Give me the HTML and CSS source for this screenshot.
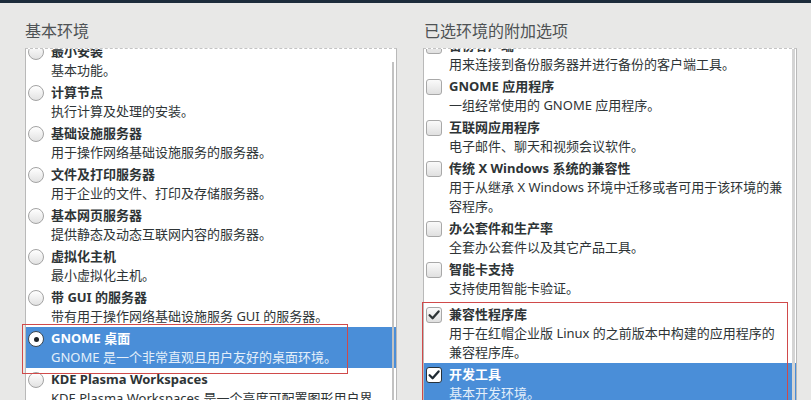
FILE: index.html
```html
<!DOCTYPE html>
<html lang="zh-CN">
<head>
<meta charset="utf-8">
<title>软件选择</title>
<link rel="stylesheet" href="styles.css">
</head>
<body>
<div class="topbar"></div>
<div class="page">
  <section class="col col-left">
    <h2 class="heading">基本环境</h2>
    <div class="listbox">
      <div class="thumb thumb-left"></div>
      <ul class="list list-left">
        <li class="item"><span class="radio"></span><div class="text"><div class="title">最小安装</div><div class="desc">基本功能。</div></div></li>
        <li class="item"><span class="radio"></span><div class="text"><div class="title">计算节点</div><div class="desc">执行计算及处理的安装。</div></div></li>
        <li class="item"><span class="radio"></span><div class="text"><div class="title">基础设施服务器</div><div class="desc">用于操作网络基础设施服务的服务器。</div></div></li>
        <li class="item"><span class="radio"></span><div class="text"><div class="title">文件及打印服务器</div><div class="desc">用于企业的文件、打印及存储服务器。</div></div></li>
        <li class="item"><span class="radio"></span><div class="text"><div class="title">基本网页服务器</div><div class="desc">提供静态及动态互联网内容的服务器。</div></div></li>
        <li class="item"><span class="radio"></span><div class="text"><div class="title">虚拟化主机</div><div class="desc">最小虚拟化主机。</div></div></li>
        <li class="item"><span class="radio"></span><div class="text"><div class="title">带 GUI 的服务器</div><div class="desc">带有用于操作网络基础设施服务 GUI 的服务器。</div></div></li>
        <li class="item selected"><span class="radio checked"></span><div class="text"><div class="title">GNOME 桌面</div><div class="desc">GNOME 是一个非常直观且用户友好的桌面环境。</div></div></li>
        <li class="item"><span class="radio"></span><div class="text"><div class="title">KDE Plasma Workspaces</div><div class="desc">KDE Plasma Workspaces 是一个高度可配置图形用户界<br>面，其中包括面板、桌面、系统图标以及桌面向导。</div></div></li>
      </ul>
    </div>
  </section>
  <section class="col col-right">
    <h2 class="heading">已选环境的附加选项</h2>
    <div class="listbox">
      <div class="thumb thumb-right"></div>
      <ul class="list list-right">
        <li class="item"><span class="check"></span><div class="text"><div class="title">备份客户端</div><div class="desc">用来连接到备份服务器并进行备份的客户端工具。</div></div></li>
        <li class="item"><span class="check"></span><div class="text"><div class="title">GNOME 应用程序</div><div class="desc">一组经常使用的 GNOME 应用程序。</div></div></li>
        <li class="item"><span class="check"></span><div class="text"><div class="title">互联网应用程序</div><div class="desc">电子邮件、聊天和视频会议软件。</div></div></li>
        <li class="item"><span class="check"></span><div class="text"><div class="title">传统 X Windows 系统的兼容性</div><div class="desc">用于从继承 X Windows 环境中迁移或者可用于该环境的兼<br>容程序。</div></div></li>
        <li class="item"><span class="check"></span><div class="text"><div class="title">办公套件和生产率</div><div class="desc">全套办公套件以及其它产品工具。</div></div></li>
        <li class="item"><span class="check"></span><div class="text"><div class="title">智能卡支持</div><div class="desc">支持使用智能卡验证。</div></div></li>
        <li class="item item-gap"><span class="check checked"><svg viewBox="0 0 16 16" width="16" height="16"><path d="M3.6 8.2 L6.6 11.2 L12.6 4.4" fill="none" stroke="#2e3436" stroke-width="2.3" stroke-linecap="round" stroke-linejoin="round"/></svg></span><div class="text"><div class="title">兼容性程序库</div><div class="desc">用于在红帽企业版 Linux 的之前版本中构建的应用程序的<br>兼容程序库。</div></div></li>
        <li class="item selected"><span class="check checked"><svg viewBox="0 0 16 16" width="16" height="16"><path d="M3.6 8.2 L6.6 11.2 L12.6 4.4" fill="none" stroke="#1f2a33" stroke-width="2.3" stroke-linecap="round" stroke-linejoin="round"/></svg></span><div class="text"><div class="title">开发工具</div><div class="desc">基本开发环境。</div></div></li>
      </ul>
    </div>
  </section>
  <div class="mark mark-left"></div>
  <div class="mark mark-right"></div>
</div>
</body>
</html>
```
FILE: styles.css
```css
* { box-sizing: border-box; }
html, body {
  margin: 0;
  padding: 0;
  height: 400px;
  overflow: hidden;
  background: #e8e8e7;
  font-family: "Noto Sans", "Noto Sans CJK SC", sans-serif;
  color: #2e3436;
}
.topbar {
  height: 3px;
  background: #1d2c3b;
}
.page {
  position: relative;
  display: flex;
  gap: 26px;
  padding: 18px 0 0 25px;
  height: 397px;
}
.col-left { width: 372px; }
.col-right { width: 374px; }
.heading {
  margin: 0 0 7px 0;
  font-size: 16px;
  line-height: 20px;
  font-weight: normal;
  color: #4e5254;
}
.col-right .heading { margin-left: 1px; }
.listbox {
  position: relative;
  height: 360px;
  background: #fff;
  border: 1px solid #b9b9b9;
  border-top: 1px dashed #c4c4c4;
  overflow: hidden;
}
.thumb {
  position: absolute;
  right: 2px;
  width: 2px;
  bottom: 0;
  background: #c2c2c2;
  z-index: 2;
}
.thumb-left { top: 13px; }
.thumb-right { top: 0; right: 1px; width: 3px; background: #d4d4d4; }
.list {
  list-style: none;
  margin: 0;
  padding: 0;
}
.list-left { margin-top: -9px; }
.list-right { margin-top: -15px; }
.item {
  display: flex;
  align-items: flex-start;
  padding: 1px 0;
  white-space: nowrap;
}
.item-gap { margin-top: 4px; }
.text { display: flex; flex-direction: column; }
.title {
  font-size: 13px;
  line-height: 20px;
  font-weight: bold;
  color: #2e3436;
}
.desc {
  font-size: 13px;
  line-height: 19px;
  color: #2e3436;
}
.item.selected { background: #4a8ed8; }
.item.selected .title { color: #fff; }
.item.selected .desc { color: #e3eefa; }

.radio {
  flex: none;
  width: 16px;
  height: 16px;
  margin: 3px 7px 0 2px;
  border-radius: 50%;
  border: 1px solid #a3a3a3;
  background: linear-gradient(#ffffff, #e2e2e2);
  position: relative;
}
.radio.checked {
  border-color: #3c4650;
  background: #fff;
}
.radio.checked::after {
  content: "";
  position: absolute;
  left: 4.5px;
  top: 4.5px;
  width: 5px;
  height: 5px;
  border-radius: 50%;
  background: #1e2328;
}
.list-right .item { padding-left: 1px; }
.check {
  flex: none;
  width: 16px;
  height: 16px;
  margin: 3px 7px 0 1px;
  border-radius: 3px;
  border: 1px solid #a8a8a8;
  background: linear-gradient(#fafafa, #e0e0e0);
  display: flex;
  align-items: center;
  justify-content: center;
}
.check svg { display: block; margin: -1px; }
.item.selected .check {
  border-color: #26313b;
  background: #fff;
}
.mark {
  position: absolute;
  border: 1px solid #d04a4a;
  pointer-events: none;
}
.mark-left { left: 22px; top: 321px; width: 326px; height: 50px; }
.mark-right { left: 422px; top: 299px; width: 366px; height: 140px; }
```
